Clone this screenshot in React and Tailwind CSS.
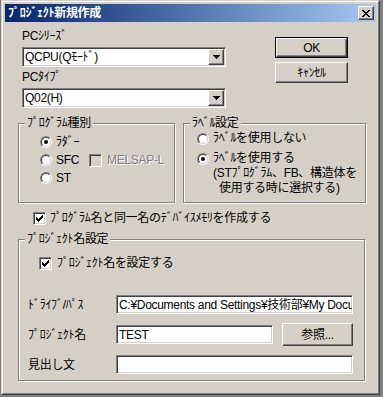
import React from "react"

const sunken =
  "border border-t-[#808080] border-l-[#808080] border-r-white border-b-white shadow-[inset_1px_1px_0_#404040,inset_-1px_-1px_0_#d4d0c8]"
const raised =
  "border border-t-white border-l-white border-r-[#404040] border-b-[#404040] shadow-[inset_-1px_-1px_0_#808080,inset_1px_1px_0_#d4d0c8]"

function Radio({ checked }) {
  return (
    <span className="w-[12px] h-[12px] shrink-0 flex rounded-full border border-t-[#808080] border-l-[#808080] border-r-white border-b-white">
      <span className="flex-1 flex items-center justify-center rounded-full border border-t-[#404040] border-l-[#404040] border-r-[#d4d0c8] border-b-[#d4d0c8] bg-white">
        {checked && <span className="w-[4px] h-[4px] rounded-full bg-black" />}
      </span>
    </span>
  )
}

function Check({ checked, disabled }) {
  const cols = [2, 3, 4, 3, 2, 1, 0]
  return (
    <span className={`w-[13px] h-[13px] shrink-0 flex items-center justify-center ${sunken} ${disabled ? "bg-[#d4d0c8]" : "bg-white"}`}>
      {checked && (
        <svg width="7" height="7" viewBox="0 0 7 7" shapeRendering="crispEdges">
          {cols.map((y, x) => (
            <rect key={x} x={x} y={y} width="1" height="3" fill="#000" />
          ))}
        </svg>
      )}
    </span>
  )
}

function Combo({ value }) {
  return (
    <div className={`mt-[4px] w-[204px] h-[20px] p-[1px] flex items-center bg-white ${sunken}`}>
      <span className="flex-1 pl-[1px] leading-[16px]">{value}</span>
      <span className={`w-[16px] h-[16px] flex items-center justify-center bg-[#d4d0c8] ${raised}`}>
        <svg width="7" height="4" viewBox="0 0 7 4" shapeRendering="crispEdges">
          <path d="M0 0H7L3.5 4Z" fill="#000" />
        </svg>
      </span>
    </div>
  )
}

function Button({ children, isDefault, className = "" }) {
  const inner = (
    <div className={`flex-1 flex items-center justify-center bg-[#d4d0c8] ${raised}`}>{children}</div>
  )
  if (isDefault) {
    return <div className={`flex border border-black ${className}`}>{inner}</div>
  }
  return <div className={`flex ${className}`}>{inner}</div>
}

function Edit({ value, className = "" }) {
  return (
    <div className={`h-[19px] bg-white flex items-center overflow-hidden whitespace-nowrap pl-[2px] ${sunken} ${className}`}>
      {value}
    </div>
  )
}

function Group({ title, className = "", children }) {
  return (
    <div className={`relative border border-[#808080] shadow-[inset_1px_1px_0_#fff,1px_1px_0_#fff] ${className}`}>
      <span className="absolute -top-[8px] left-[6px] px-[2px] bg-[#d4d0c8] leading-[14px]">{title}</span>
      {children}
    </div>
  )
}

export default function App() {
  return (
    <div
      className="w-[383px] h-[397px] bg-[#808080] pl-[1px] text-[12px] text-black leading-[14px] tracking-[-0.3px]"
      style={{ fontFamily: '"Liberation Sans", "Noto Sans CJK JP", sans-serif' }}
    >
      <div className="w-[379px] h-[395px] border border-t-[#d4d0c8] border-l-[#d4d0c8] border-r-[#404040] border-b-[#404040]">
        <div className="h-full border border-t-white border-l-white border-r-[#808080] border-b-[#808080] bg-[#d4d0c8] p-[2px] flex flex-col">
          {/* Title bar */}
          <div className="h-[18px] shrink-0 flex items-center justify-between pl-[3px] pr-[2px] bg-linear-to-r from-[#0a246a] to-[#a6caf0]">
            <span className="text-white font-bold">ﾌﾟﾛｼﾞｪｸﾄ新規作成</span>
            <span className={`w-[16px] h-[14px] flex items-center justify-center bg-[#d4d0c8] ${raised}`}>
              <svg width="8" height="7" viewBox="0 0 8 7" shapeRendering="crispEdges">
                <path d="M0 0h2v1H0zM6 0h2v1H6zM1 1h2v1H1zM5 1h2v1H5zM2 2h4v1H2zM3 3h2v1H3zM2 4h4v1H2zM1 5h2v1H1zM5 5h2v1H5zM0 6h2v1H0zM6 6h2v1H6z" fill="#000" />
              </svg>
            </span>
          </div>

          {/* PC series / type + buttons */}
          <div className="flex">
            <div className="ml-[17px] w-[229px] flex flex-col">
              <span className="mt-[7px]">PCｼﾘｰｽﾞ</span>
              <Combo value="QCPU(Qﾓｰﾄﾞ)" />
              <span className="mt-[3px]">PCﾀｲﾌﾟ</span>
              <Combo value="Q02(H)" />
            </div>
            <div className="ml-[24px] mt-[15px] flex flex-col gap-[4px]">
              <Button isDefault className="w-[73px] h-[21px]">OK</Button>
              <Button className="w-[73px] h-[21px]">ｷｬﾝｾﾙ</Button>
            </div>
          </div>

          {/* Program type / label setting */}
          <div className="flex mt-[15px]">
            <Group title="ﾌﾟﾛｸﾞﾗﾑ種別" className="ml-[13px] w-[157px] h-[80px]">
              <div className="pl-[21px] pt-[9px] flex flex-col">
                <div className="h-[18px] flex items-center gap-[4px]">
                  <Radio checked />
                  <span>ﾗﾀﾞｰ</span>
                </div>
                <div className="h-[18px] flex items-center gap-[4px] whitespace-nowrap">
                  <Radio />
                  <span className="w-[29px]">SFC</span>
                  <Check disabled />
                  <span className="ml-[1px] text-[#808080] [text-shadow:1px_1px_0_#fff]">MELSAP-L</span>
                </div>
                <div className="h-[18px] flex items-center gap-[4px]">
                  <Radio />
                  <span>ST</span>
                </div>
              </div>
            </Group>
            <Group title="ﾗﾍﾞﾙ設定" className="ml-[8px] w-[183px] h-[80px]">
              <div className="pl-[13px] pt-[7px] flex flex-col leading-[15px]">
                <div className="flex items-center gap-[4px]">
                  <Radio />
                  <span>ﾗﾍﾞﾙを使用しない</span>
                </div>
                <div className="mt-[5px] flex items-start gap-[4px]">
                  <span className="mt-[2px]">
                    <Radio checked />
                  </span>
                  <div className="flex flex-col">
                    <span>ﾗﾍﾞﾙを使用する</span>
                    <span>(STﾌﾟﾛｸﾞﾗﾑ、FB、構造体を</span>
                    <span className="pl-[6px]">使用する時に選択する)</span>
                  </div>
                </div>
              </div>
            </Group>
          </div>

          {/* Device memory checkbox */}
          <div className="mt-[7px] ml-[28px] h-[16px] flex items-center gap-[4px]">
            <Check checked />
            <span>ﾌﾟﾛｸﾞﾗﾑ名と同一名のﾃﾞﾊﾞｲｽﾒﾓﾘを作成する</span>
          </div>

          {/* Project name setting */}
          <Group title="ﾌﾟﾛｼﾞｪｸﾄ名設定" className="mt-[13px] ml-[13px] w-[347px] h-[142px]">
            <div className="pt-[15px] flex flex-col">
              <div className="ml-[20px] h-[16px] flex items-center gap-[5px]">
                <Check checked />
                <span>ﾌﾟﾛｼﾞｪｸﾄ名を設定する</span>
              </div>
              <div className="mt-[24px] ml-[9px] flex items-center">
                <span className="w-[88px]">ﾄﾞﾗｲﾌﾞ/ﾊﾟｽ</span>
                <Edit className="w-[237px]" value="C:¥Documents and Settings¥技術部¥My Documents" />
              </div>
              <div className="mt-[9px] ml-[9px] h-[23px] flex items-center">
                <span className="w-[88px]">ﾌﾟﾛｼﾞｪｸﾄ名</span>
                <Edit className="w-[157px]" value="TEST" />
                <Button className="ml-[9px] w-[71px] h-[23px]">参照...</Button>
              </div>
              <div className="mt-[9px] ml-[9px] flex items-center">
                <span className="w-[88px]">見出し文</span>
                <Edit className="w-[237px]" value="" />
              </div>
            </div>
          </Group>
        </div>
      </div>
    </div>
  )
}
